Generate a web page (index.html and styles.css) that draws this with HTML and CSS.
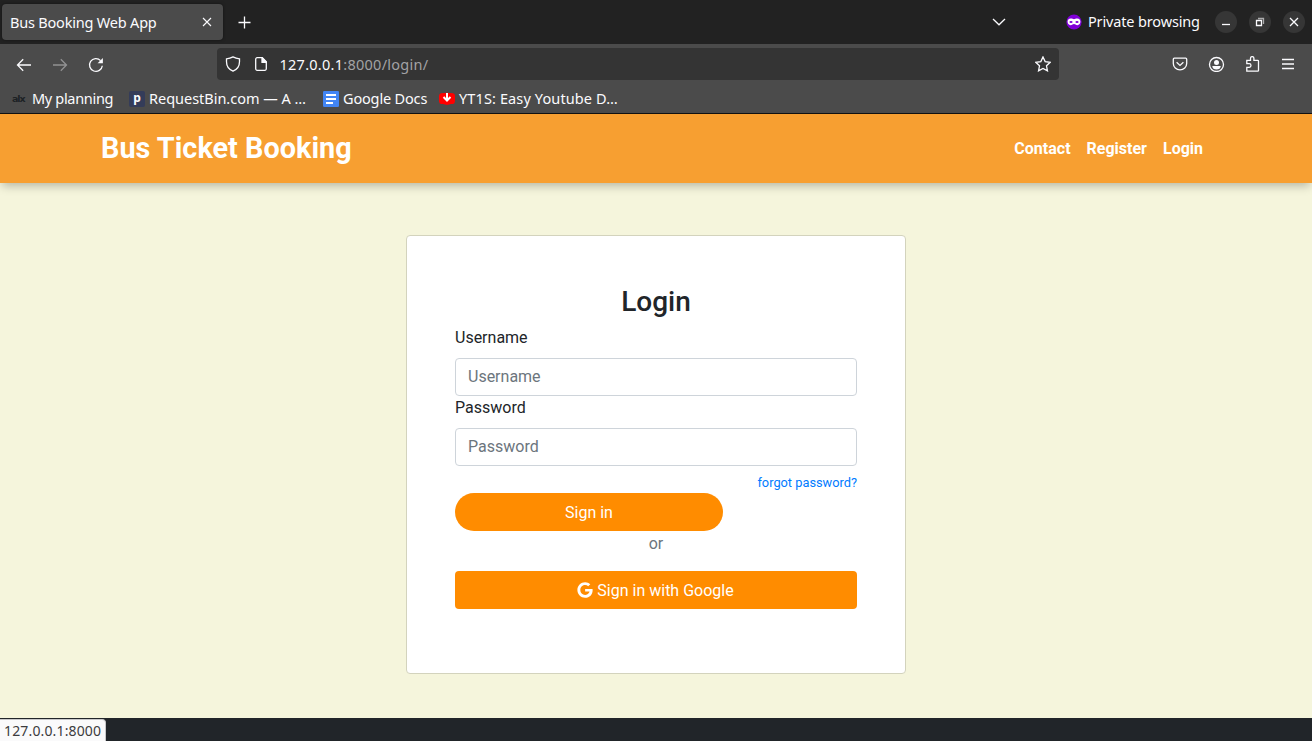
FILE: index.html
```html
<!DOCTYPE html>
<html lang="en">
<head>
<meta charset="utf-8">
<title>Bus Booking Web App</title>
<link rel="stylesheet" href="styles.css">
</head>
<body>
<div class="browser">
  <div class="tabstrip">
    <div class="tab">
      <span class="tab-title">Bus Booking Web App</span>
      <svg class="tab-close" width="10" height="10" viewBox="0 0 10 10"><path d="M1 1l8 8M9 1L1 9"/></svg>
    </div>
    <svg class="tab-new" width="13" height="13" viewBox="0 0 13 13"><path d="M6.5 .5v12M.5 6.5h12"/></svg>
    <svg class="tab-list" width="14" height="8" viewBox="0 0 14 8"><path d="M1 1l6 5.8L13 1"/></svg>
    <div class="private">
      <svg width="16" height="16" viewBox="0 0 16 16" stroke="none"><circle cx="8" cy="8" r="7.6" fill="#8000d7"/><path fill="#fff" d="M4.800 4.500C6.200 4.500 7 5.200 8 5.200s1.800-.7 3.200-.7c2.300 0 3.200 1.500 3.200 3.100 0 2-1.200 3.600-3 3.600-1.500 0-2.300-1.200-3.400-1.200s-1.900 1.200-3.400 1.200c-1.800 0-3-1.600-3-3.600 0-1.600.9-3.100 3.200-3.100z"/><ellipse cx="5" cy="8" rx="1.600" ry="1.050" fill="#8000d7"/><ellipse cx="11" cy="8" rx="1.600" ry="1.050" fill="#8000d7"/></svg>
      <span class="private-text">Private browsing</span>
    </div>
    <div class="window-buttons">
      <span class="win"><svg width="22" height="22" viewBox="0 0 22 22"><path d="M7 13.500h8"/></svg></span>
      <span class="win"><svg width="22" height="22" viewBox="0 0 22 22"><path d="M7.500 9.500h5v5h-5z"/><path d="M9 7.500h5.500V13" opacity=".6"/></svg></span>
      <span class="win"><svg width="22" height="22" viewBox="0 0 22 22"><path d="M7 7l8 8M15 7l-8 8"/></svg></span>
    </div>
  </div>
  <div class="toolbar">
    <div class="nav-buttons">
      <svg width="16" height="16" viewBox="0 0 16 16"><path d="M15 8H1.500M7.200 2.300L1.500 8l5.700 5.700"/></svg>
      <svg class="dim" width="16" height="16" viewBox="0 0 16 16"><path d="M1 8h13.500M8.800 2.300L14.500 8l-5.700 5.700"/></svg>
      <svg width="16" height="16" viewBox="0 0 16 16"><path d="M14.300 8.700A6.400 6.400 0 1 1 12.600 3.600"/><path d="M14.900 1v5.300H9.600z" fill="#fbfbfe" stroke="none"/></svg>
    </div>
    <div class="urlbar">
      <svg width="16" height="16" viewBox="0 0 16 16"><path d="M8 .9c2.300 1.200 4.400 1.700 6.500 2v2.800c0 4.300-2.600 7.800-6.500 9.400C4.100 13.500 1.500 10 1.500 5.700V2.900c2.100-.3 4.200-.8 6.500-2z"/></svg>
      <svg width="12" height="14" viewBox="0 0 12 14"><path d="M2.200.7H7.300l4 4v7.100a1.500 1.500 0 0 1-1.500 1.500H2.200A1.500 1.500 0 0 1 .7 11.800V2.200A1.500 1.500 0 0 1 2.200.7z"/><path d="M7 .7v4.600h4.500z" fill="#fbfbfe"/></svg>
      <span class="url">127.0.0.1<span class="url-path">:8000/login/</span></span>
      <svg class="star" width="16" height="16" viewBox="0 0 16 16"><path d="M8 .9l2.150 4.700 5.050.65-3.700 3.500.95 5.100L8 12.400l-4.450 2.450.95-5.100-3.700-3.500 5.050-.65z"/></svg>
    </div>
    <div class="actions">
      <svg width="16" height="16" viewBox="0 0 16 16"><path d="M2.300 2.200h11.400c.6 0 1 .4 1 1V7.600a6.700 6.200 0 0 1-13.400 0V3.200c0-.6.400-1 1-1z"/><path d="M4.600 6.300L8 9.400l3.400-3.100"/></svg>
      <svg width="17" height="16" viewBox="0 0 17 16"><circle cx="8.500" cy="8.500" r="7"/><circle cx="8.500" cy="6.400" r="2.500" fill="#fbfbfe" stroke="none"/><path d="M4.300 9.900h8.400c0 2.200-1.800 3.600-4.200 3.600s-4.200-1.400-4.200-3.600z" fill="#fbfbfe" stroke="none"/></svg>
      <svg width="15" height="16" viewBox="0 0 15 16"><path d="M1.800 15.200V11.300h2.400a1.800 1.800 0 1 0 0-3.600H1.800V4.400h3.700V2.300a1.700 1.700 0 0 1 3.400 0v2.100h3.800q.8 0 .8.800v9.200q0 .8-.8.800z"/></svg>
      <svg width="16" height="16" viewBox="0 0 16 16"><path d="M2 3.500h12M2 8h12M2 12.500h12"/></svg>
    </div>
  </div>
  <div class="bookmarks">
    <span class="bookmark b1"><span class="alx">alx</span><span class="label">My planning</span></span>
    <span class="bookmark b2"><span class="pipe">p</span><span class="label">RequestBin.com — A …</span></span>
    <span class="bookmark b3"><svg width="16" height="16" viewBox="0 0 16 16"><rect width="16" height="16" rx="1.200" fill="#4285f4"/><path stroke="#fff" stroke-width="2" d="M3 4h10M3 8h10M3 12h7"/></svg><span class="label">Google Docs</span></span>
    <span class="bookmark b4"><svg width="16" height="16" viewBox="0 0 16 16"><path fill="#f00" d="M2 2.200Q8 1.400 14 2.200q1.800.3 2 2.500v5.600q-.2 2.400-2 2.700H12L8 14l-4-1H2Q.2 12.700 0 10.300V4.700q.2-2.200 2-2.500z"/><path stroke="#fff" stroke-width="2" fill="none" d="M8 2v7M4.500 6L8 9.500 11.500 6"/></svg><span class="label">YT1S: Easy Youtube D…</span></span>
  </div>
</div>
<header class="site-header">
  <div class="container">
    <a class="brand">Bus Ticket Booking</a>
    <nav class="site-nav"><a>Contact</a><a>Register</a><a>Login</a></nav>
  </div>
</header>
<main class="page">
  <form class="card">
    <h3 class="card-title">Login</h3>
    <label class="field-label" for="u">Username</label>
    <input class="field" id="u" type="text" placeholder="Username">
    <label class="field-label" for="p">Password</label>
    <input class="field" id="p" type="password" placeholder="Password">
    <a class="forgot">forgot password?</a>
    <button class="btn signin" type="button">Sign in</button>
    <p class="or">or</p>
    <button class="btn google" type="button"><svg width="16" height="16" viewBox="0 0 488 512"><path fill="#fff" d="M488 261.800C488 403.300 391.100 504 248 504 110.800 504 0 393.200 0 256S110.800 8 248 8c66.800 0 123 24.500 166.300 64.900l-67.500 64.900C258.500 52.600 94.300 116.600 94.300 256c0 86.500 69.100 156.600 153.700 156.600 98.200 0 135-70.400 140.800-106.900H248v-85.300h236.100c2.300 12.700 3.900 24.900 3.900 41.400z"/></svg><span>Sign in with Google</span></button>
  </form>
</main>
<footer class="footer"><span class="status">127.0.0.1:8000</span></footer>
</body>
</html>
```

FILE: styles.css
```css
* { box-sizing: border-box; }
body {
  margin: 0;
  height: 741px;
  display: flex;
  flex-direction: column;
  overflow: hidden;
  background: #f5f5dc;
  color: #212529;
  font: 16px/24px Roboto, sans-serif;
}

/* Browser window */
.browser {
  flex: none;
  height: 114px;
  border-bottom: 1px solid #121212;
  background: #4b4b4b;
  color: #fbfbfe;
  font: 14.5px/20px "Noto Sans", sans-serif;
  white-space: nowrap;
}
.browser svg { flex: none; display: block; }
.tabstrip, .toolbar { stroke: #fbfbfe; stroke-width: 1.3; fill: none; }
.tabstrip { height: 44px; display: flex; align-items: center; background: #222; padding-right: 7px; }
.tab {
  width: 221px;
  height: 36px;
  margin-left: 2px;
  padding: 0 11px 0 8px;
  display: flex;
  align-items: center;
  justify-content: space-between;
  border-radius: 4px;
  background: #4b4b4b;
  box-shadow: 0 0 3px rgba(0, 0, 0, .5);
}
.tab-title { letter-spacing: -.2px; }
.tab-close { stroke-width: 1.1; }
.tab-new { margin-left: 15px; }
.tab-list { margin-left: 741px; }
.private { margin-left: 60px; display: flex; align-items: center; gap: 6px; width: 134px; }
.private-text { letter-spacing: -.15px; margin-top: -2px; }
.window-buttons { margin-left: auto; display: flex; gap: 12px; }
.win { width: 22px; height: 22px; border-radius: 50%; background: #363636; }
.toolbar { height: 41px; padding-top: 4px; display: flex; }
.nav-buttons { width: 217px; height: 33px; padding-left: 16px; display: flex; align-items: center; gap: 20px; }
.dim { opacity: .4; }
.urlbar {
  width: 842px;
  height: 32px;
  padding: 0 8px;
  display: flex;
  align-items: center;
  border-radius: 4px;
  background: #343434;
}
.urlbar svg + svg { margin-left: 14px; }
.url { margin-left: 12.5px; letter-spacing: .26px; }
.url-path { color: #a2a2a4; }
.urlbar .star { margin-left: auto; }
.actions { height: 32px; margin-left: 113px; display: flex; align-items: center; gap: 20px; }
.bookmarks { height: 28px; padding-left: 12px; display: flex; align-items: center; }
.bookmark { display: flex; align-items: center; gap: 4px; }
.label { margin-top: -2px; }
.b1 { width: 117px; }
.b1 .label { letter-spacing: -.32px; }
.b2 { width: 194px; }
.b2 .label { letter-spacing: -.02px; }
.b3 { width: 116px; }
.b3 .label { letter-spacing: -.16px; }
.b4 .label { letter-spacing: .12px; }
.alx { width: 16px; color: #1d2225; font: bold 9.5px/16px "DejaVu Sans", sans-serif; letter-spacing: -1.1px; }
.pipe { width: 16px; height: 16px; border-radius: 2px; background: #343c59; text-align: center; font: bold 12px/14px "Noto Sans", sans-serif; }

/* Site header */
.site-header {
  flex: none;
  height: 69px;
  position: relative;
  background: #f79f31;
  box-shadow: 0 5px 9px -2px rgba(0, 0, 0, .25);
}
.container { width: 1110px; height: 100%; margin: 0 auto; display: flex; align-items: center; justify-content: space-between; }
.brand { color: #fff; font-size: 28.8px; font-weight: 700; margin-top: -2px; letter-spacing: .03px; }
.site-nav { display: flex; gap: 16px; padding-right: 8px; color: #fff; font-weight: 700; }

/* Login card */
.page { flex: 1; }
.card {
  width: 500px;
  height: 439px;
  margin: 52px auto 0;
  padding: 48px;
  display: flex;
  flex-direction: column;
  border: 1px solid #d3d3bd;
  border-radius: 4px;
  background: #fff;
}
.card-title { margin: 0 0 7px; padding-top: 1px; text-align: center; font-size: 28px; line-height: 33.6px; font-weight: 500; }
.field-label { margin-bottom: 8px; }
.field {
  height: 38px;
  padding: 6px 12px;
  border: 1px solid #ced4da;
  border-radius: 4px;
  background: #fff;
  font: inherit;
}
.field::placeholder { color: #6c757d; opacity: 1; }
.forgot { margin-top: 6px; align-self: flex-end; color: #007bff; font-size: 12.8px; line-height: 21.4px; }
.btn {
  height: 38px;
  padding: 2px 0 0;
  border: 0;
  border-radius: 4px;
  background: #ff8c00;
  color: #fff;
  font: inherit;
  flex: none;
}
.signin { width: 268px; border-radius: 20px; }
.or { margin: 0 0 16px; padding-top: 1px; line-height: 23px; color: #6c757d; text-align: center; }
.google { display: flex; align-items: center; justify-content: center; gap: 4px; padding-right: 1px; }
.google svg { margin-top: -2px; }

/* Footer */
.footer { flex: none; height: 23px; display: flex; align-items: flex-end; background: #212529; }
.status {
  width: 106px;
  height: 22px;
  padding-left: 4px;
  border: 1px solid #c8c8ca;
  border-width: 1px 1px 0 0;
  border-radius: 0 4px 0 0;
  background: #fafafb;
  color: #3c3c3e;
  font: 14px/21px "Noto Sans", sans-serif;
  letter-spacing: .15px;
}
```
